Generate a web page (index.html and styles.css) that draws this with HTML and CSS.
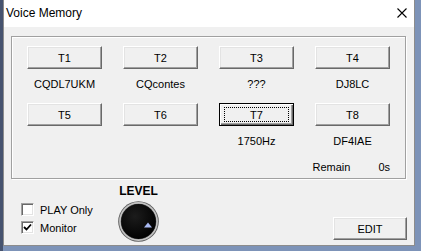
FILE: index.html
```html
<!DOCTYPE html>
<html lang="en">
<head>
    <meta charset="UTF-8">
    <title>Voice Memory</title>
    <link rel="stylesheet" href="styles.css">
</head>
<body>
    <div class="window">
        <div class="titlebar">
            <span class="title">Voice Memory</span>
            <svg class="close" width="10" height="10" viewBox="0 0 10 10">
                <path d="M0.5 0.5 L9.5 9.5 M9.5 0.5 L0.5 9.5" stroke="#000" stroke-width="1.1" fill="none"/>
            </svg>
        </div>
        <div class="client">
            <div class="group">
                <div class="grid">
                    <button class="btn">T1</button>
                    <button class="btn">T2</button>
                    <button class="btn">T3</button>
                    <button class="btn">T4</button>
                    <div class="label">CQDL7UKM</div>
                    <div class="label">CQcontes</div>
                    <div class="label">???</div>
                    <div class="label">DJ8LC</div>
                    <button class="btn">T5</button>
                    <button class="btn">T6</button>
                    <button class="btn focused"><span class="focus-ring">T7</span></button>
                    <button class="btn">T8</button>
                    <div class="label"></div>
                    <div class="label"></div>
                    <div class="label">1750Hz</div>
                    <div class="label">DF4IAE</div>
                </div>
                <div class="remain">
                    <span>Remain</span>
                    <span>0s</span>
                </div>
            </div>
            <div class="bottom">
                <div class="checks">
                    <label class="check"><span class="box"></span>PLAY Only</label>
                    <label class="check"><span class="box checked">
                        <svg width="9" height="9" viewBox="0 0 9 9">
                            <path d="M1 4 L3.5 6.5 L8 1.5" stroke="#000" stroke-width="1.8" fill="none"/>
                        </svg>
                    </span>Monitor</label>
                </div>
                <div class="level">
                    <div class="level-title">LEVEL</div>
                    <svg class="knob" width="41" height="41" viewBox="0 0 41 41">
                        <defs>
                            <radialGradient id="knobfill" cx="40%" cy="35%" r="70%">
                                <stop offset="0" stop-color="#1c1c1c"/>
                                <stop offset="1" stop-color="#000"/>
                            </radialGradient>
                        </defs>
                        <circle cx="20.5" cy="20.5" r="20.3" fill="#5a5a5a"/>
                        <circle cx="20.5" cy="20.5" r="18.6" fill="none" stroke="#c4c4c4" stroke-width="1.6"/>
                        <circle cx="20.5" cy="20.5" r="17.4" fill="url(#knobfill)"/>
                        <polygon points="26,26.5 34,26.5 30,21.5" fill="#a9b9f2"/>
                    </svg>
                </div>
                <button class="btn edit">EDIT</button>
            </div>
        </div>
    </div>
</body>
</html>
```

FILE: styles.css
```css
body, html {
    margin: 0;
    padding: 0;
    height: 100%;
    background: linear-gradient(to right, #46536f 0, #46536f 3px, #7d93b8 3px);
    font-family: "Liberation Sans", Arial, sans-serif;
    font-size: 11px;
    color: #000;
    overflow: hidden;
}

.window {
    margin-left: 3px;
    width: 412px;
    height: 246px;
    box-sizing: border-box;
    border: 1px solid #8c8c8c;
    border-top: none;
    background: #f0f0f0;
    display: flex;
    flex-direction: column;
}

.titlebar {
    height: 27px;
    background: #fff;
    display: flex;
    align-items: center;
    justify-content: space-between;
    padding: 0 7px 0 2px;
}

.title {
    font-size: 12px;
    margin-top: -1px;
}

.close {
    display: block;
    margin-top: -1px;
}

.client {
    flex: 1;
    padding-top: 9px;
}

.group {
    margin-left: 7px;
    width: 395px;
    height: 143px;
    box-sizing: border-box;
    border: 1px solid #a0a0a0;
    box-shadow: inset 1px 1px 0 #fff, 1px 1px 0 #fff;
    padding: 9px 0 0 15px;
}

.grid {
    display: grid;
    grid-template-columns: repeat(4, 75px);
    grid-template-rows: 23px 34px 23px 34px;
    column-gap: 21px;
}

.btn {
    font-family: inherit;
    font-size: 11px;
    color: #000;
    background: #f0f0f0;
    border: 1px solid;
    border-color: #fff #696969 #696969 #fff;
    box-shadow: inset -1px -1px 0 #a0a0a0, inset 1px 1px 0 #e3e3e3;
    padding: 0;
    margin: 0;
    height: 23px;
    width: 75px;
    display: flex;
    align-items: center;
    justify-content: center;
}

.btn.focused {
    border: 1px solid #000;
    box-shadow: inset 1px 1px 0 #fff, inset -1px -1px 0 #696969, inset -2px -2px 0 #a0a0a0;
}

.focus-ring {
    width: 65px;
    height: 15px;
    line-height: 15px;
    box-sizing: border-box;
    border: 1px dotted #000;
    text-align: center;
}

.label {
    text-align: center;
    padding-top: 8px;
    line-height: 14px;
}

.remain {
    display: flex;
    justify-content: flex-end;
    gap: 28px;
    padding-right: 15px;
    line-height: 14px;
}

.bottom {
    display: flex;
    align-items: flex-start;
    padding-left: 17px;
}

.checks {
    width: 97px;
    margin-top: 24px;
    display: flex;
    flex-direction: column;
    gap: 5px;
}

.check {
    display: flex;
    align-items: center;
    gap: 6px;
    height: 13px;
}

.box {
    width: 13px;
    height: 13px;
    box-sizing: border-box;
    background: #fff;
    border: 1px solid;
    border-color: #a0a0a0 #fff #fff #a0a0a0;
    box-shadow: inset 1px 1px 0 #696969, inset -1px -1px 0 #e3e3e3;
    display: flex;
    align-items: center;
    justify-content: center;
}

.level {
    width: 41px;
    margin-top: 5px;
    display: flex;
    flex-direction: column;
    align-items: center;
}

.level-title {
    font-weight: bold;
    font-size: 12px;
    line-height: 14px;
    white-space: nowrap;
}

.knob {
    display: block;
    margin-top: 3px;
}

.edit {
    margin-left: auto;
    margin-right: 7px;
    margin-top: 38px;
    width: 74px;
}
```
